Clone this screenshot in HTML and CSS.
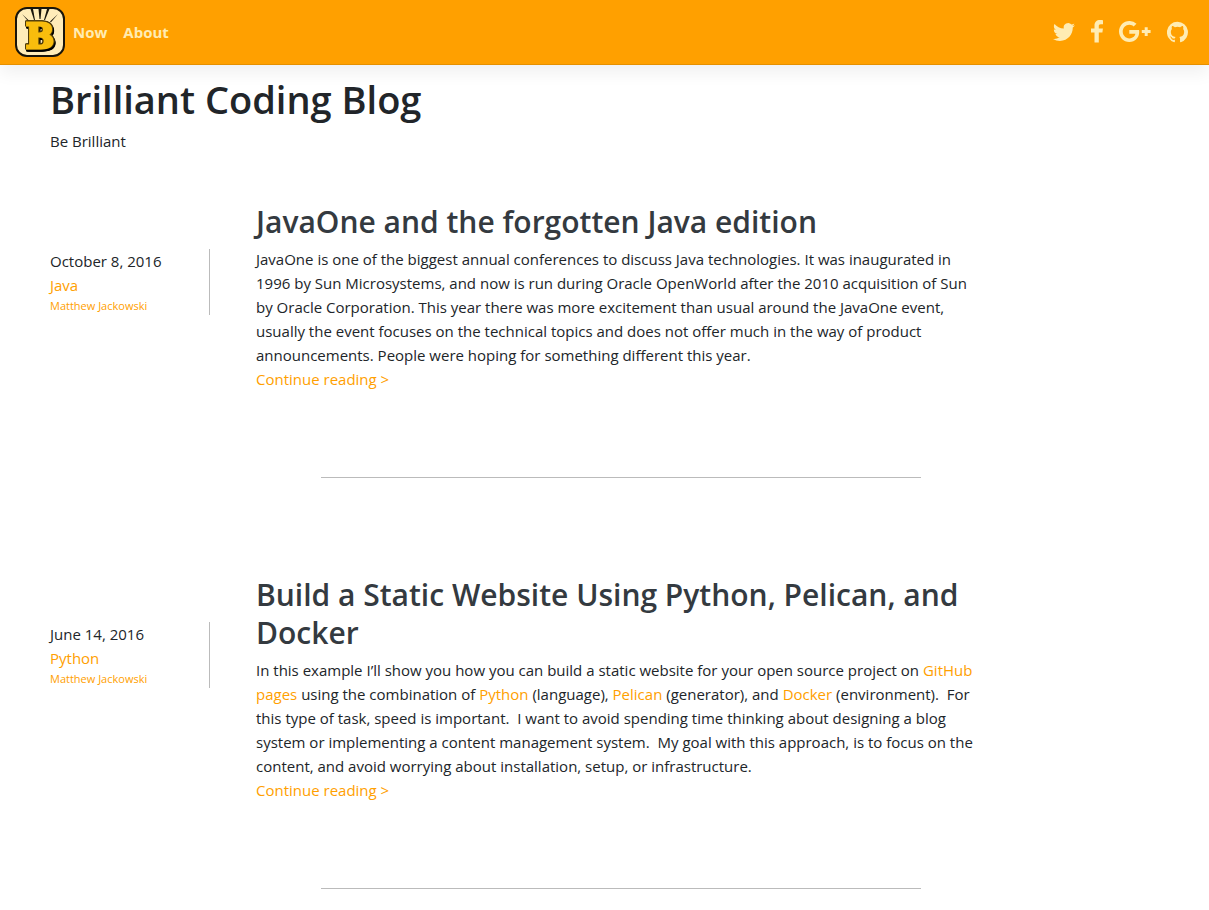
FILE: index.html
```html
<!DOCTYPE html>
<html lang="en">
<head>
<meta charset="utf-8">
<meta name="viewport" content="width=device-width, initial-scale=1">
<title>Brilliant Coding Blog</title>
<link rel="stylesheet" href="styles.css">
</head>
<body>
<nav class="navbar">
  <a class="brand" href="#" aria-label="Home">
    <svg class="logo" viewBox="0 0 50 50" aria-hidden="true">
      <rect x="1" y="1" width="48" height="48" rx="11" fill="#ffecb9" stroke="#19150b" stroke-width="2"/>
      <g fill="#19150b">
        <path d="M7 7l8 7.500-1 .8z"/>
        <path d="M15.500 2h2.500l2 11h-1z"/>
        <path d="M23.500 2h3l-1 10h-1z"/>
        <path d="M32 2h2.500l-4.500 11h-1z"/>
        <path d="M43 7l-8 7.500 1 .8z"/>
      </g>
      <text class="mark" x="25" y="41">B</text>
    </svg>
  </a>
  <a class="nav-link" href="#">Now</a>
  <a class="nav-link" href="#">About</a>
  <div class="social">
    <a href="#" aria-label="Twitter"><svg width="22" height="22" viewBox="0 0 24 24"><path d="M23.950 4.570a10 10 0 0 1-2.820.77 4.960 4.960 0 0 0 2.160-2.720c-.95.55-2 .96-3.130 1.180a4.920 4.920 0 0 0-8.380 4.480C7.690 8.090 4.070 6.130 1.640 3.160a4.820 4.820 0 0 0-.67 2.480c0 1.710.87 3.210 2.190 4.100a4.900 4.900 0 0 1-2.230-.62v.06a4.920 4.920 0 0 0 3.950 4.830 5 5 0 0 1-2.210.08 4.940 4.940 0 0 0 4.600 3.420A9.870 9.870 0 0 1 0 19.540a14 14 0 0 0 7.550 2.210c9.050 0 14-7.500 14-13.980 0-.21 0-.42-.02-.63a9.940 9.940 0 0 0 2.420-2.570z"/></svg></a>
    <a href="#" aria-label="Facebook"><svg width="12" height="24" viewBox="0 0 12 24"><path d="M12 .3v4H9.800C8.100 4.300 7.800 5 7.800 6.200v2.300h4.100l-.5 4H7.800V22.500H3.500v-10H0v-4h3.500V5.600C3.500 2 5.700 0 9 0c1.500 0 2.700.1 3 .3z"/></svg></a>
    <a href="#" aria-label="Google Plus"><svg width="32" height="22" viewBox="0 0 32 22"><path d="M10.300 9v3.800h6.100c-.3 1.600-1.900 4.600-6.100 4.600-3.700 0-6.600-3-6.600-6.800s2.900-6.800 6.600-6.800c2.100 0 3.500.9 4.300 1.700l2.900-2.800A10.300 10.300 0 0 0 10.300 0C4.600 0 0 4.700 0 10.500S4.600 21 10.300 21c6 0 9.900-4.200 9.900-10.200 0-.7-.1-1.200-.2-1.800zM25.700 6.200v2.900h-2.900v3h2.900V15h3v-2.900h2.900v-3h-2.900V6.200z"/></svg></a>
    <a href="#" aria-label="GitHub"><svg width="21" height="22" viewBox="0 0 24 24"><path d="M12 .3a12 12 0 0 0-3.800 23.400c.6.100.8-.3.800-.6v-2.200c-3.300.7-4-1.400-4-1.400-.6-1.400-1.400-1.800-1.400-1.800-1-.7.100-.7.100-.7 1.200.1 1.900 1.200 1.900 1.200 1 1.800 2.800 1.300 3.500 1 .1-.8.400-1.300.7-1.600-2.600-.3-5.400-1.300-5.400-5.900 0-1.300.5-2.400 1.200-3.200-.1-.3-.5-1.500.1-3.200 0 0 1-.3 3.300 1.200a11.500 11.500 0 0 1 6 0c2.300-1.500 3.300-1.200 3.300-1.200.7 1.700.3 2.900.1 3.200.8.800 1.200 1.900 1.200 3.200 0 4.600-2.800 5.600-5.500 5.900.4.400.8 1.100.8 2.200v3.300c0 .3.200.7.800.6A12 12 0 0 0 12 .3"/></svg></a>
  </div>
</nav>
<header class="masthead">
  <h1 class="site-title">Brilliant Coding Blog</h1>
  <p class="tagline">Be Brilliant</p>
</header>
<main class="posts">
  <article class="post">
    <aside class="meta">
      <time datetime="2016-10-08">October 8, 2016</time>
      <a href="#">Java</a>
      <a class="author" href="#">Matthew Jackowski</a>
    </aside>
    <div class="entry">
      <h2 class="entry-title">JavaOne and the forgotten Java edition</h2>
      <p class="summary">JavaOne is one of the biggest annual conferences to discuss Java technologies. It was inaugurated in 1996 by Sun Microsystems, and now is run during Oracle OpenWorld after the 2010 acquisition of Sun by Oracle Corporation. This year there was more excitement than usual around the JavaOne event, usually the event focuses on the technical topics and does not offer much in the way of product announcements. People were hoping for something different this year.</p>
      <a href="#">Continue reading &gt;</a>
      <hr class="divider">
    </div>
  </article>
  <article class="post">
    <aside class="meta">
      <time datetime="2016-06-14">June 14, 2016</time>
      <a href="#">Python</a>
      <a class="author" href="#">Matthew Jackowski</a>
    </aside>
    <div class="entry">
      <h2 class="entry-title">Build a Static Website Using Python, Pelican, and Docker</h2>
      <p class="summary">In this example I’ll show you how you can build a static website for your open source project on <a href="#">GitHub pages</a> using the combination of <a href="#">Python</a> (language), <a href="#">Pelican</a> (generator), and <a href="#">Docker</a> (environment).&nbsp; For this type of task, speed is important.&nbsp; I want to avoid spending time thinking about designing a blog system or implementing a content management system.&nbsp; My goal with this approach, is to focus on the content, and avoid worrying about installation, setup, or infrastructure.</p>
      <a href="#">Continue reading &gt;</a>
      <hr class="divider">
    </div>
  </article>
</main>
</body>
</html>
```
FILE: styles.css
```css
* { box-sizing: border-box; }
body {
  margin: 0;
  background: #fff;
  color: #212529;
  font-family: "Open Sans", "Noto Sans", sans-serif;
  font-size: 15px;
  line-height: 24px;
}
a { color: #ffa000; text-decoration: none; }
h1, h2, p { margin: 0; }
.navbar {
  display: flex;
  align-items: center;
  padding: 7px 21px 7px 15px;
  background: #ffa000;
  border-bottom: 1px solid #e69000;
  box-shadow: 0 8px 16px rgba(0, 0, 0, 0.06);
}
.brand, .logo { display: block; }
.logo { width: 50px; height: 50px; }
.mark {
  fill: #f9bd0d;
  stroke: #f9bd0d;
  stroke-width: 3px;
  font-family: "DejaVu Serif", serif;
  font-size: 33px;
  font-weight: 700;
  text-anchor: middle;
  filter:
    drop-shadow(1px 0 0 #4d3a08)
    drop-shadow(-1px 0 0 #4d3a08)
    drop-shadow(0 -1px 0 #4d3a08)
    drop-shadow(1px 2px 0 #000);
}
.nav-link {
  padding: 0 8px;
  color: #ffecb3;
  font-weight: 700;
}
.social { display: flex; align-items: center; gap: 16px; margin-left: auto; }
.social svg { display: block; fill: #ffecb3; }
.masthead { padding: 10px 50px 50px; }
.site-title {
  margin-bottom: 6px;
  font-size: 38px;
  font-weight: 600;
  line-height: 48px;
}
.posts { padding: 0 50px; }
.post {
  display: grid;
  grid-template-columns: 160px minmax(0, 730px);
  column-gap: 46px;
  align-items: start;
}
.meta {
  display: flex;
  flex-direction: column;
  margin-top: 46px;
  border-right: 1px solid #bbb;
}
.author { font-size: 11px; line-height: 18px; }
.entry-title {
  margin-bottom: 6px;
  color: #343a40;
  font-size: 30px;
  font-weight: 600;
  line-height: 38px;
}
.divider {
  max-width: 600px;
  margin: 86px auto 98px;
  border: 0;
  border-top: 1px solid #bbb;
}
.post:last-child .divider { margin-bottom: 20px; }
```
